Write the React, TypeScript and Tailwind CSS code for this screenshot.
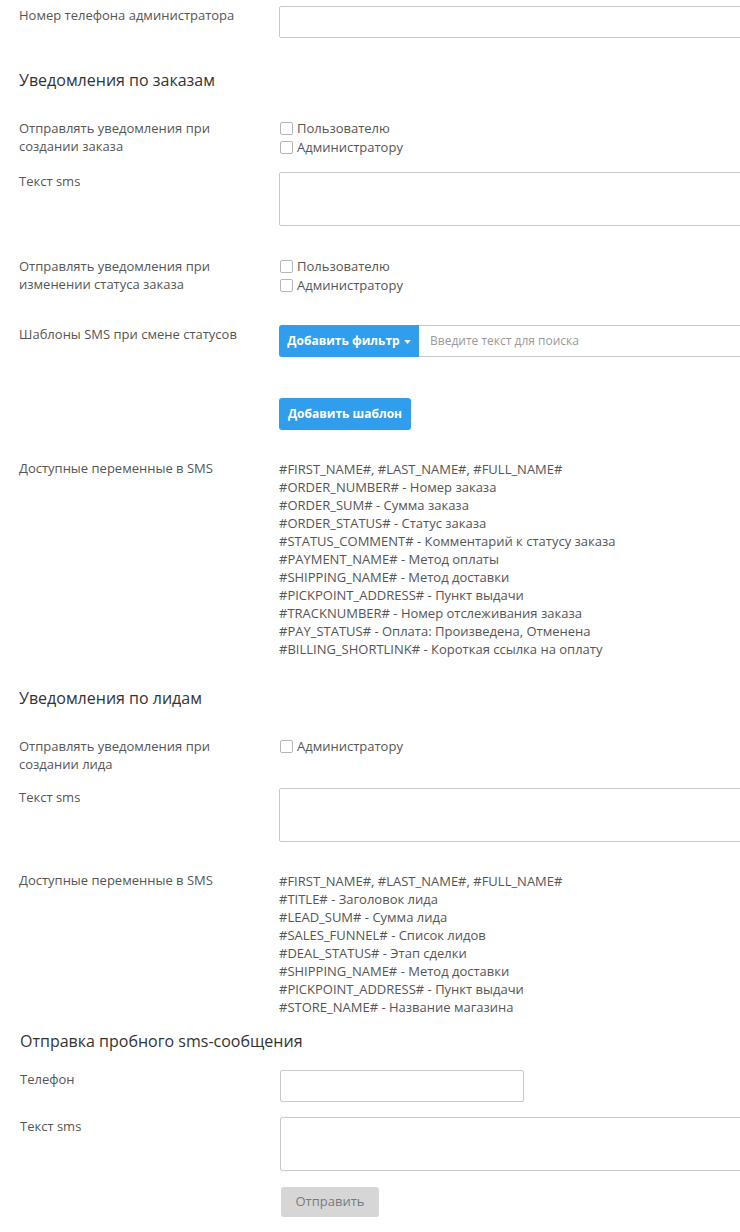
import type { ReactNode } from "react";

const orderVars = [
  "#FIRST_NAME#, #LAST_NAME#, #FULL_NAME#",
  "#ORDER_NUMBER# - Номер заказа",
  "#ORDER_SUM# - Сумма заказа",
  "#ORDER_STATUS# - Статус заказа",
  "#STATUS_COMMENT# - Комментарий к статусу заказа",
  "#PAYMENT_NAME# - Метод оплаты",
  "#SHIPPING_NAME# - Метод доставки",
  "#PICKPOINT_ADDRESS# - Пункт выдачи",
  "#TRACKNUMBER# - Номер отслеживания заказа",
  "#PAY_STATUS# - Оплата: Произведена, Отменена",
  "#BILLING_SHORTLINK# - Короткая ссылка на оплату",
];

const leadVars = [
  "#FIRST_NAME#, #LAST_NAME#, #FULL_NAME#",
  "#TITLE# - Заголовок лида",
  "#LEAD_SUM# - Сумма лида",
  "#SALES_FUNNEL# - Список лидов",
  "#DEAL_STATUS# - Этап сделки",
  "#SHIPPING_NAME# - Метод доставки",
  "#PICKPOINT_ADDRESS# - Пункт выдачи",
  "#STORE_NAME# - Название магазина",
];

function Row({
  label,
  children,
  className = "",
}: {
  label: ReactNode;
  children?: ReactNode;
  className?: string;
}) {
  return (
    <div className={`flex ${className}`}>
      <div className="w-[279px] shrink-0 pl-[19px] pr-4 text-[13px] leading-[18px] text-[#555]">
        {label}
      </div>
      <div className="min-w-0 flex-1">{children}</div>
    </div>
  );
}

function Heading({ children, className = "" }: { children: ReactNode; className?: string }) {
  return (
    <h3 className={`pl-[19px] text-[16px] leading-[22px] text-[#333] ${className}`}>
      {children}
    </h3>
  );
}

function Check({ label }: { label: string }) {
  return (
    <label className="flex h-[19px] items-center text-[13px] text-[#555]">
      <span className="ml-px mr-[4px] h-[13px] w-[13px] rounded-[2px] border border-[#b5b5b5] bg-white" />
      {label}
    </label>
  );
}

function TextInput() {
  return <div className="h-[32px] w-[520px] rounded-[2px] border border-[#c8c8c8] bg-white" />;
}

function TextArea() {
  return <div className="h-[54px] w-[520px] rounded-[2px] border border-[#c8c8c8] bg-white" />;
}

function Vars({ items }: { items: string[] }) {
  return (
    <div className="pt-px text-[13px] leading-[18px] text-[#555]">
      {items.map((v) => (
        <div key={v}>{v}</div>
      ))}
    </div>
  );
}

export default function App() {
  return (
    <div
      className="min-h-[1232px] w-[740px] overflow-hidden bg-white"
      style={{ fontFamily: '"Open Sans", "Noto Sans", sans-serif' }}
    >
      <Row label="Номер телефона администратора" className="pt-[6px]">
        <TextInput />
      </Row>

      <Heading className="mt-[31px]">Уведомления по заказам</Heading>

      <Row
        className="mt-[28px]"
        label={
          <>
            Отправлять уведомления при
            <br />
            создании заказа
          </>
        }
      >
        <Check label="Пользователю" />
        <Check label="Администратору" />
      </Row>

      <Row label="Текст sms" className="mt-[15px]">
        <TextArea />
      </Row>

      <Row
        className="mt-[31px]"
        label={
          <>
            Отправлять уведомления при
            <br />
            изменении статуса заказа
          </>
        }
      >
        <Check label="Пользователю" />
        <Check label="Администратору" />
      </Row>

      <Row label="Шаблоны SMS при смене статусов" className="mt-[30px]">
        <div className="flex h-[32px] w-[520px]">
          <button className="flex h-full w-[140px] shrink-0 items-center justify-center gap-[4px] rounded-l-[3px] bg-[#309ded] text-[12px] font-bold text-white">
            Добавить фильтр
            <svg width="7" height="4" viewBox="0 0 8 5" className="mt-px">
              <path d="M0 0h8L4 5z" fill="white" />
            </svg>
          </button>
          <div className="flex flex-1 items-center border-y border-r border-[#c8c8c8] pl-[11px] text-[12px] text-[#999]">
            Введите текст для поиска
          </div>
        </div>
        <button className="mt-[41px] h-[32px] w-[132px] rounded-[3px] bg-[#309ded] text-[12px] font-bold text-white">
          Добавить шаблон
        </button>
      </Row>

      <Row label="Доступные переменные в SMS" className="mt-[29px]">
        <Vars items={orderVars} />
      </Row>

      <Heading className="mt-[29px]">Уведомления по лидам</Heading>

      <Row
        className="mt-[28px]"
        label={
          <>
            Отправлять уведомления при
            <br />
            создании лида
          </>
        }
      >
        <Check label="Администратору" />
      </Row>

      <Row label="Текст sms" className="mt-[15px]">
        <TextArea />
      </Row>

      <Row label="Доступные переменные в SMS" className="mt-[29px]">
        <Vars items={leadVars} />
      </Row>

      <div className="pl-px">
        <Heading className="mt-[14px]">Отправка пробного sms-сообщения</Heading>

        <Row label="Телефон" className="mt-[18px]">
          <div className="h-[32px] w-[244px] rounded-[2px] border border-[#c8c8c8] bg-white" />
        </Row>

        <Row label="Текст sms" className="mt-[15px]">
          <TextArea />
        </Row>

        <Row label="" className="mt-[16px]">
          <button className="ml-px h-[30px] w-[98px] rounded-[3px] bg-[#d6d6d6] text-[13px] text-[#7a7a7a]">
            Отправить
          </button>
        </Row>
      </div>
    </div>
  );
}
